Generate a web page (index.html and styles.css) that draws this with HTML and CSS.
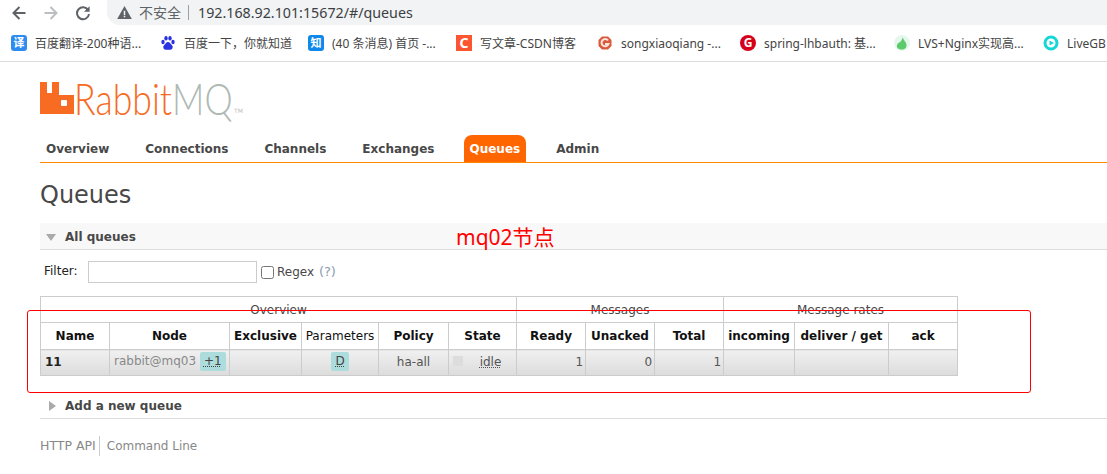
FILE: index.html
```html
<!DOCTYPE html>
<html lang="en">
<head>
    <meta charset="UTF-8">
    <title>RabbitMQ Management</title>
    <link rel="stylesheet" href="styles.css">
</head>
<body>
    <!-- browser chrome -->
    <div class="toolbar">
        <svg class="nav-icon" viewBox="0 0 16 16"><path d="M14.500 8H2.500M8.500 2 2.500 8l6 6" fill="none" stroke="#5f6368" stroke-width="2"/></svg>
        <svg class="nav-icon" viewBox="0 0 16 16"><path d="M1.500 8h12M7.500 2l6 6-6 6" fill="none" stroke="#bcbec1" stroke-width="2"/></svg>
        <svg class="nav-icon" viewBox="0 0 16 16"><path d="M13.200 5.200A6 6 0 1 0 14 9" fill="none" stroke="#5f6368" stroke-width="2"/><path d="M14.600 1.200v5.600H9z" fill="#5f6368"/></svg>
        <div class="address">
            <svg class="warn" viewBox="0 0 16 16"><path d="M8 1 15.800 15H.2z" fill="#5f6368"/><path d="M7.200 6h1.600v4.600H7.200zM7.200 11.500h1.600v1.500H7.200z" fill="#f1f3f4"/></svg>
            <span class="insecure">不安全</span>
            <span class="url">192.168.92.101:15672/#/queues</span>
        </div>
    </div>

    <div class="bookmarks">
        <div class="bookmark w-fanyi"><span class="fav fav-blue">译</span>百度翻译-200种语...</div>
        <div class="bookmark w-baidu">
            <svg class="fav-svg" viewBox="0 0 16 16" fill="#2932e1"><ellipse cx="3" cy="7" rx="1.700" ry="2.200"/><ellipse cx="6" cy="3.200" rx="1.700" ry="2.200"/><ellipse cx="10" cy="3.200" rx="1.700" ry="2.200"/><ellipse cx="13" cy="7" rx="1.700" ry="2.200"/><path d="M8 7c-2 0-2.500 2-4 3.300C2.500 12 3.500 15 6 14.700c1-.1 3-.1 4 0 2.500.3 3.500-2.700 2-4.400C10.500 9 10 7 8 7z"/></svg>
            百度一下，你就知道
        </div>
        <div class="bookmark w-zhihu"><span class="fav fav-zhihu">知</span>(40 条消息) 首页 -...</div>
        <div class="bookmark w-csdn"><span class="fav fav-csdn">C</span>写文章-CSDN博客</div>
        <div class="bookmark w-gitee">
            <svg class="fav-svg" viewBox="0 0 16 16"><path d="M5 1.500h6L14.500 5v6L11 14.500H5L1.500 11V5z" fill="#d9593d"/><path d="M11 5.500A3.600 3.600 0 1 0 11.500 9H8" fill="none" stroke="#fbe4dc" stroke-width="2"/></svg>
            songxiaoqiang -...
        </div>
        <div class="bookmark w-spring"><span class="fav fav-spring">G</span>spring-lhbauth: 基...</div>
        <div class="bookmark w-lvs">
            <svg class="fav-svg" viewBox="0 0 16 16"><circle cx="8" cy="8" r="8" fill="#e6f8ee"/><path d="M8.500 2c.5 3 4.500 5 4 9-.4 3-3.500 4-6 3.500C3.500 14 1.800 11.500 3.500 9c1.500-2 4.500-2 5-7z" fill="#5ccb6c"/></svg>
            LVS+Nginx实现高...
        </div>
        <div class="bookmark">
            <svg class="fav-svg" viewBox="0 0 16 16"><circle cx="8" cy="8" r="6" fill="none" stroke="#16d6d6" stroke-width="3"/><path d="M6.500 5.500 11 8l-4.500 2.500z" fill="#16d6d6"/></svg>
            LiveGB
        </div>
    </div>

    <!-- management page -->
    <div class="page">
        <div class="logo">
            <svg class="logo-mark" viewBox="0 0 34 32"><path d="M0 0h7v11h5V0h7v13h15v19H0z" fill="#f76b23"/><rect x="21" y="18" width="6" height="6" rx="1" fill="#fff"/></svg>
            <div class="logo-text"><span class="logo-rabbit">Rabbit</span><span class="logo-mq">MQ</span></div>
            <span class="logo-tm">TM</span>
        </div>

        <ul class="tabs">
            <li class="tab">Overview</li>
            <li class="tab">Connections</li>
            <li class="tab">Channels</li>
            <li class="tab">Exchanges</li>
            <li class="tab active">Queues</li>
            <li class="tab">Admin</li>
        </ul>

        <h1>Queues</h1>

        <div class="section-head">
            <span class="arrow-down"></span>All queues
        </div>

        <div class="filter">
            <label class="filter-label" for="filter">Filter:</label>
            <input type="text" id="filter">
            <input type="checkbox" id="regex" class="regex-box">
            <label class="regex" for="regex">Regex <span class="help">(?)</span></label>
        </div>

        <table class="queues">
            <colgroup>
                <col class="c-name"><col class="c-node"><col class="c-excl"><col class="c-params"><col class="c-policy"><col class="c-state">
                <col class="c-ready"><col class="c-unacked"><col class="c-total">
                <col class="c-incoming"><col class="c-deliver"><col class="c-ack">
            </colgroup>
            <thead>
                <tr class="groups">
                    <th colspan="6">Overview</th>
                    <th colspan="3">Messages</th>
                    <th colspan="3">Message rates</th>
                </tr>
                <tr class="heads">
                    <th>Name</th>
                    <th>Node</th>
                    <th>Exclusive</th>
                    <th class="plain">Parameters</th>
                    <th>Policy</th>
                    <th>State</th>
                    <th>Ready</th>
                    <th>Unacked</th>
                    <th>Total</th>
                    <th>incoming</th>
                    <th>deliver / get</th>
                    <th>ack</th>
                </tr>
            </thead>
            <tbody>
                <tr>
                    <td class="q-name">11</td>
                    <td class="q-node">rabbit@mq03 <abbr class="tag">+1</abbr></td>
                    <td></td>
                    <td class="center"><abbr class="tag">D</abbr></td>
                    <td class="center">ha-all</td>
                    <td class="q-state"><span class="state-dot"></span><abbr class="idle">idle</abbr></td>
                    <td class="num">1</td>
                    <td class="num">0</td>
                    <td class="num">1</td>
                    <td></td>
                    <td></td>
                    <td></td>
                </tr>
            </tbody>
        </table>

        <div class="section-add">
            <span class="arrow-right"></span>Add a new queue
        </div>

        <div class="footer">
            <span class="foot-link first">HTTP API</span><span class="foot-link">Command Line</span>
        </div>
    </div>

    <!-- annotations drawn over the screenshot -->
    <div class="note">mq02节点</div>
    <div class="note-box"></div>
</body>
</html>
```

FILE: styles.css
```css
html, body {
    margin: 0;
    padding: 0;
}
body {
    font-family: "DejaVu Sans", "Noto Sans CJK SC", sans-serif;
    font-size: 12px;
    color: #484848;
    background-color: #fff;
    height: 474px;
    overflow: hidden;
    position: relative;
}

/* browser chrome */
.toolbar {
    display: flex;
    align-items: center;
    height: 25px;
    padding-left: 11px;
    gap: 16px;
}
.nav-icon {
    width: 16px;
    height: 16px;
    flex: none;
}
.address {
    display: flex;
    align-items: center;
    flex: 1;
    height: 25px;
    padding-left: 10px;
    background-color: #f1f3f4;
    border-bottom-left-radius: 13px;
}
.warn {
    width: 15px;
    height: 15px;
    margin-right: 7px;
}
.insecure {
    font-family: "Noto Sans CJK SC", sans-serif;
    font-size: 14px;
    color: #5f6368;
    padding-right: 7px;
    border-right: 1px solid #9aa0a6;
    line-height: 15px;
}
.url {
    font-family: "Noto Sans", "Open Sans", sans-serif;
    font-size: 14.250px;
    color: #3c4043;
    margin-left: 9px;
}
.bookmarks {
    display: flex;
    align-items: center;
    height: 36px;
    padding-left: 11px;
    border-bottom: 1px solid #dadce0;
    font-family: "Noto Sans", "Noto Sans CJK SC", sans-serif;
    font-size: 12px;
    color: #444;
    white-space: nowrap;
    overflow: hidden;
}
.bookmark {
    display: flex;
    align-items: center;
    gap: 8px;
    flex: none;
}
.w-fanyi { width: 149px; }
.w-baidu { width: 148px; }
.w-zhihu { width: 148px; }
.w-csdn { width: 141px; }
.w-gitee { width: 143px; }
.w-spring { width: 154px; }
.w-lvs { width: 149px; }
.fav {
    display: block;
    width: 16px;
    height: 16px;
    line-height: 16px;
    text-align: center;
    color: #fff;
    font-size: 11px;
    font-weight: bold;
    flex: none;
}
.fav-svg {
    width: 16px;
    height: 16px;
    flex: none;
}
.fav-blue { background-color: #2e8bf0; border-radius: 3px; }
.fav-zhihu { background-color: #0f88eb; border-radius: 3px; }
.fav-csdn { background-color: #fc5531; font-size: 14px; }
.fav-spring { background-color: #d6001c; border-radius: 50%; font-size: 12px; }

/* management page */
.page {
    padding-left: 40px;
}
.logo {
    display: flex;
    align-items: flex-end;
    height: 34px;
    margin-top: 19px;
}
.logo-mark {
    width: 34px;
    height: 32px;
    margin-bottom: 1px;
    flex: none;
}
.logo-text {
    width: 159px;
    flex: none;
    font-family: "Lato", sans-serif;
    font-weight: 300;
    font-size: 44px;
    line-height: 34px;
    white-space: nowrap;
    transform: scaleX(0.81);
    transform-origin: left bottom;
}
.logo-rabbit { color: #f76b23; }
.logo-mq { color: #aeb9b4; }
.logo-tm {
    font-size: 6px;
    line-height: 8px;
    color: #bbb;
    margin-left: 1px;
}
.tabs {
    display: flex;
    gap: 24px;
    list-style: none;
    margin: 20px 0 0;
    padding: 0;
    height: 27px;
    border-bottom: 1px solid #f80;
    font-weight: bold;
}
.tab {
    padding: 0 6px;
    line-height: 28px;
}
.tab.active {
    padding-left: 5px;
    background-color: #f60;
    color: #fff;
    border-radius: 8px 8px 0 0;
}
h1 {
    margin: 18px 0 0;
    font-size: 24px;
    font-weight: normal;
    line-height: 28px;
    color: #484848;
}
.section-head {
    display: flex;
    align-items: center;
    height: 24px;
    padding-top: 2px;
    margin-top: 14px;
    background-color: #f8f8f8;
    border-bottom: 1px solid #ddd;
    font-weight: bold;
}
.arrow-down {
    width: 0;
    height: 0;
    margin: 0 9px 0 6px;
    border-left: 5.500px solid transparent;
    border-right: 5.500px solid transparent;
    border-top: 7px solid #aaa;
}
.filter {
    display: flex;
    align-items: center;
    height: 22px;
    margin-top: 11px;
    padding-left: 4px;
}
.filter label {
    margin-bottom: 2px;
}
.filter-label {
    color: #222;
    width: 44px;
}
#filter {
    width: 169px;
    height: 22px;
    box-sizing: border-box;
    border: 1px solid #ccc;
    padding: 0;
    margin: 0;
}
.regex-box {
    width: 13px;
    height: 13px;
    margin: 0 3px 0 4px;
}
.regex { color: #484848; }
.help { color: #8a9bb0; font-size: 13px; margin-left: 1px; }

.queues {
    table-layout: fixed;
    width: 917px;
    margin-top: 13px;
    border-collapse: collapse;
}
.c-name { width: 69px; }
.c-node { width: 120px; }
.c-excl { width: 72px; }
.c-params { width: 77px; }
.c-policy { width: 70px; }
.c-state { width: 68px; }
.c-ready { width: 69px; }
.c-unacked { width: 69px; }
.c-total { width: 69px; }
.c-incoming { width: 71px; }
.c-deliver { width: 94px; }
.c-ack { width: 69px; }
.queues th,
.queues td {
    border: 1px solid #ccc;
    padding: 0;
    white-space: nowrap;
}
.groups th {
    height: 25px;
    font-weight: normal;
    color: #484848;
}
.heads th {
    height: 26px;
    font-weight: bold;
    color: #111;
}
.heads th.plain { font-weight: normal; }
.queues td {
    height: 23px;
    padding-bottom: 2px;
    background: linear-gradient(#f0f0f0, #dcdcdc);
    color: #555;
    text-align: left;
}
.queues td.center { text-align: center; }
.queues td.num {
    text-align: right;
    padding-right: 2px;
}
.queues td.q-name {
    padding-left: 4px;
    font-weight: bold;
    color: #222;
}
.queues td.q-node {
    padding-left: 4px;
    color: #888;
}
.tag {
    display: inline-block;
    padding: 0 4px;
    line-height: 19px;
    border-radius: 2px;
    background-color: #acdcdc;
    color: #444;
    text-decoration: underline dotted;
}
.queues td.q-state {
    position: relative;
    text-align: center;
    padding-left: 16px;
}
.state-dot {
    position: absolute;
    left: 4px;
    top: 6px;
    width: 10px;
    height: 10px;
    background-color: #ddd;
}
.idle {
    text-decoration: underline dotted;
}
.section-add {
    display: flex;
    align-items: center;
    height: 24px;
    padding-top: 2px;
    margin-top: 16px;
    border-bottom: 1px solid #ddd;
    font-weight: bold;
}
.arrow-right {
    width: 0;
    height: 0;
    margin: 0 9px;
    border-top: 5.500px solid transparent;
    border-bottom: 5.500px solid transparent;
    border-left: 7px solid #aaa;
}
.footer {
    display: flex;
    margin-top: 17px;
    color: #888;
    font-size: 12px;
    line-height: 20px;
}
.foot-link.first {
    font-size: 12.500px;
    padding-right: 3px;
    border-right: 1px solid #ccc;
    margin-right: 7px;
}

/* annotations */
.note {
    position: absolute;
    left: 456px;
    top: 225px;
    font-family: "Noto Sans", "Noto Sans CJK SC", sans-serif;
    font-size: 21px;
    line-height: 24px;
    color: #f00;
}
.note-box {
    position: absolute;
    left: 27px;
    top: 310px;
    width: 1002px;
    height: 81px;
    border: 1px solid #f00;
    border-radius: 3px;
}
```
